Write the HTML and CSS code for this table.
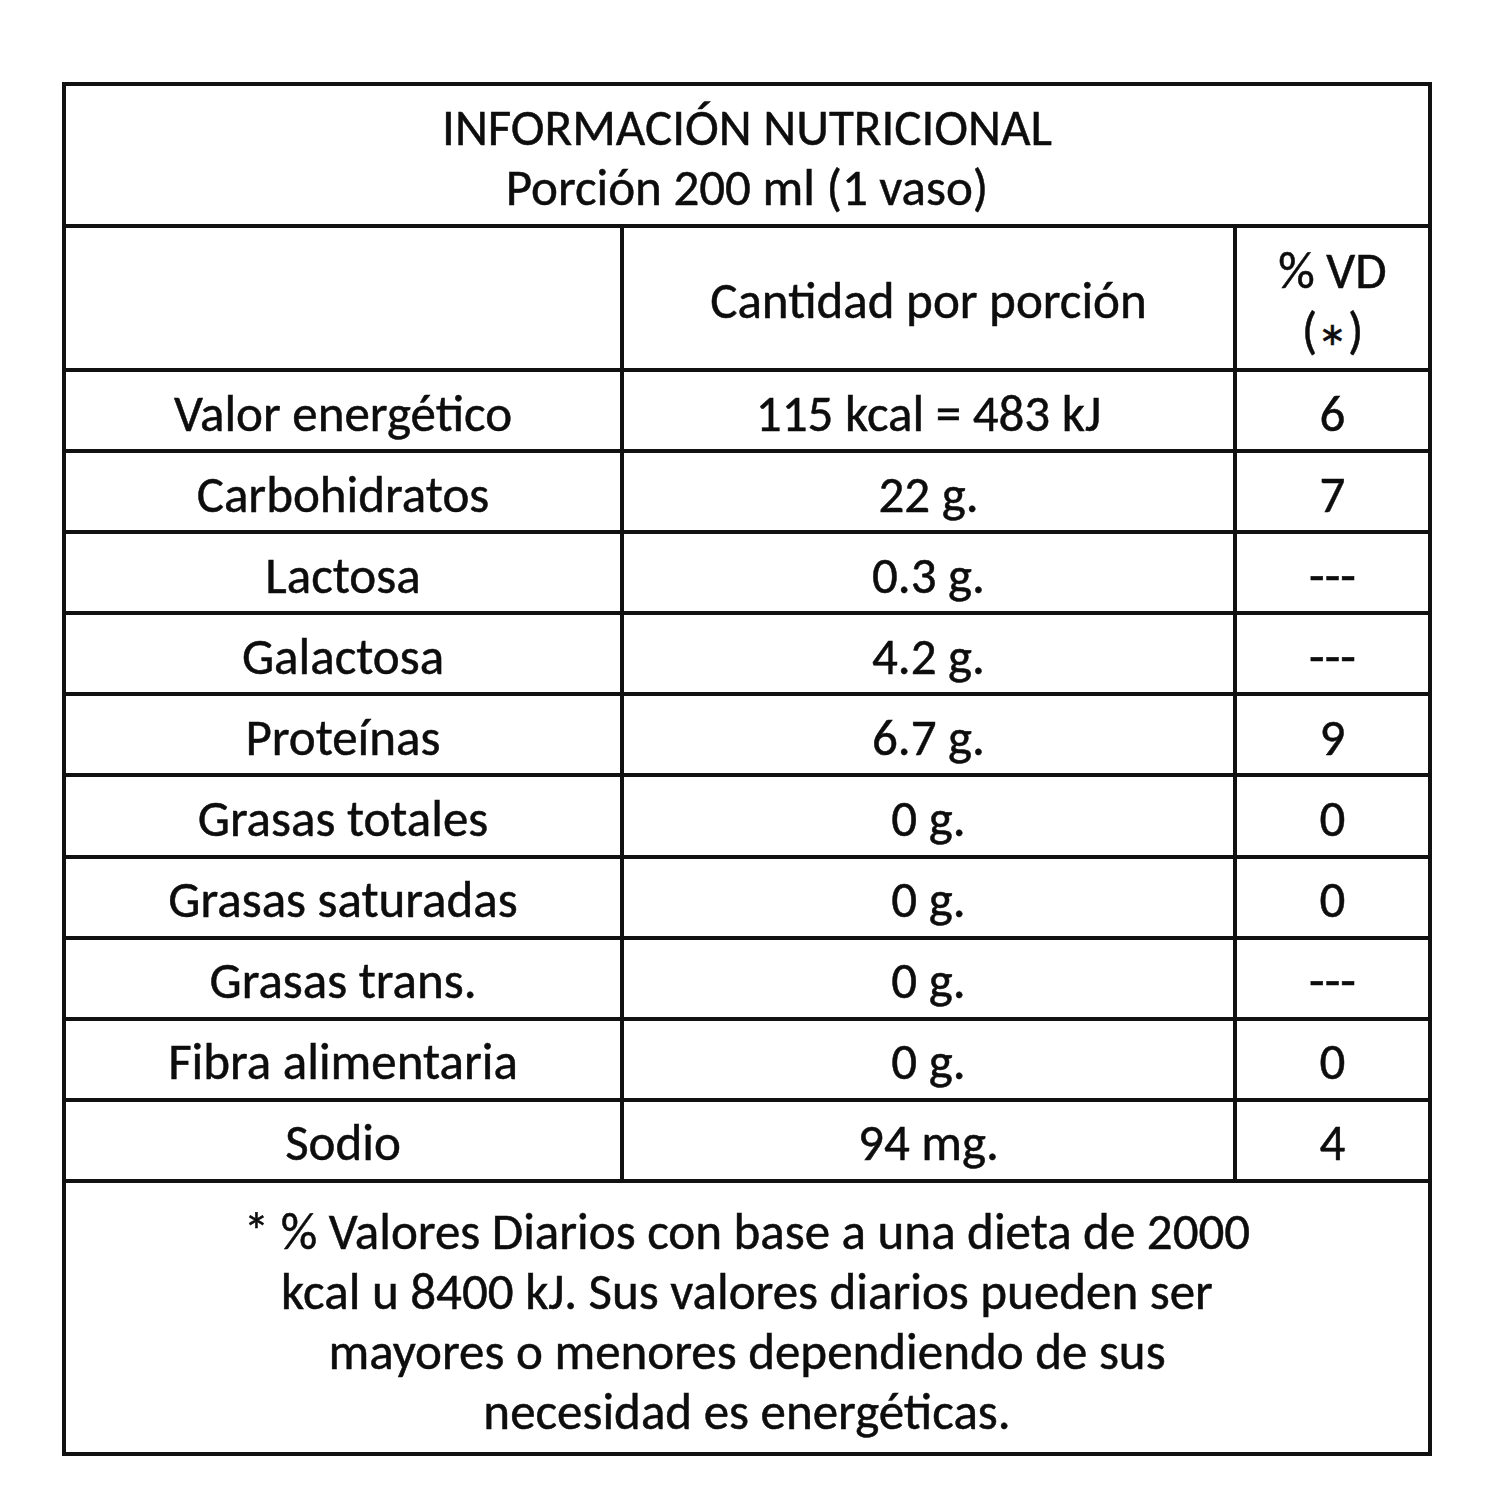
FILE: index.html
```html
<!DOCTYPE html>
<html lang="es">
<head>
<meta charset="utf-8">
<title>Información nutricional</title>
<link rel="stylesheet" href="styles.css">
</head>
<body>
<div class="label">
  <div class="cell title"><span>INFORMACIÓN NUTRICIONAL</span><span>Porción 200 ml (1 vaso)</span></div>
  <div class="cell"></div>
  <div class="cell head">Cantidad por porción</div>
  <div class="cell head vd"><span>% VD</span><span>(<span class="star">∗</span>)</span></div>

  <div class="cell">Valor energético</div><div class="cell">115 kcal = 483 kJ</div><div class="cell">6</div>
  <div class="cell">Carbohidratos</div><div class="cell">22 g.</div><div class="cell">7</div>
  <div class="cell">Lactosa</div><div class="cell">0.3 g.</div><div class="cell">---</div>
  <div class="cell">Galactosa</div><div class="cell">4.2 g.</div><div class="cell">---</div>
  <div class="cell">Proteínas</div><div class="cell">6.7 g.</div><div class="cell">9</div>
  <div class="cell">Grasas totales</div><div class="cell">0 g.</div><div class="cell">0</div>
  <div class="cell">Grasas saturadas</div><div class="cell">0 g.</div><div class="cell">0</div>
  <div class="cell">Grasas trans.</div><div class="cell">0 g.</div><div class="cell">---</div>
  <div class="cell">Fibra alimentaria</div><div class="cell">0 g.</div><div class="cell">0</div>
  <div class="cell">Sodio</div><div class="cell">94 mg.</div><div class="cell">4</div>

  <div class="cell footer"><p>* % Valores Diarios con base a una dieta de 2000<br>kcal u 8400 kJ. Sus valores diarios pueden ser<br>mayores o menores dependiendo de sus<br>necesidad es energéticas.</p></div>
</div>
</body>
</html>
```
FILE: styles.css
```css
html, body {
  margin: 0;
  padding: 0;
  background: #ffffff;
}

body {
  font-family: Carlito, Calibri, Lato, "Open Sans", sans-serif;
  color: #0d0d0d;
}

.label {
  margin: 82px 0 0 62px;
  width: 1370px;
  box-sizing: border-box;
  padding: 4px;
  background: #111111;
  display: grid;
  grid-template-columns: 554px 609px 191px;
  grid-template-rows: 138px 140px repeat(10, 77.1px) 269px;
  gap: 4px;
}

.cell {
  background: #ffffff;
  display: flex;
  flex-direction: column;
  align-items: center;
  justify-content: center;
  text-align: center;
  font-size: 51px;
  line-height: 60px;
  white-space: nowrap;
  padding-top: 6px;
  box-sizing: border-box;
  -webkit-text-stroke: 0.5px #0d0d0d;
}

.title {
  grid-column: 1 / 4;
  padding-top: 5px;
}

.footer {
  grid-column: 1 / 4;
  padding-top: 10px;
}

.footer p {
  margin: 0;
}

.star {
  font-family: "DejaVu Sans", sans-serif;
  font-size: 32px;
  line-height: 1;
  vertical-align: 3px;
  padding: 0 2px;
}
```
